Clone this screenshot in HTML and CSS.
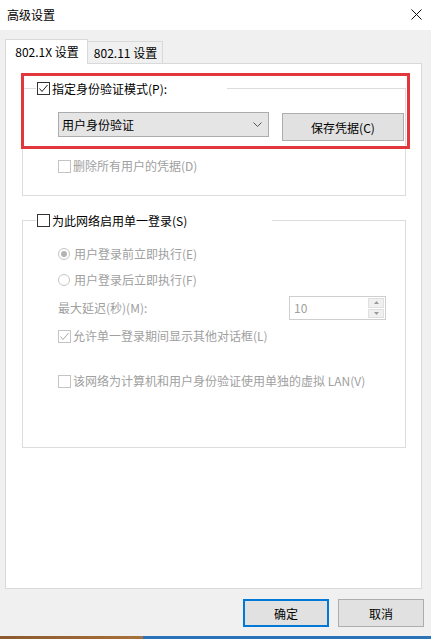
FILE: index.html
```html
<!DOCTYPE html>
<html>
<head>
    <meta charset="utf-8">
    <title>高级设置</title>
    <link rel="stylesheet" href="styles.css">
</head>
<body>
    <div class="window">
        <div class="titlebar">
            <span class="title">高级设置</span>
            <svg class="close" width="11" height="11" viewBox="0 0 11 11">
                <path d="M0.5 0.5 L10.5 10.5 M10.5 0.5 L0.5 10.5" stroke="#111" stroke-width="1" fill="none"/>
            </svg>
        </div>

        <div class="tabs">
            <div class="tab active">802.1X 设置</div>
            <div class="tab">802.11 设置</div>
        </div>

        <div class="panel">
            <!-- 身份验证模式 -->
            <fieldset class="group group-auth">
                <legend class="legend legend-auth">
                    <span class="check on">
                        <svg width="11" height="11" viewBox="0 0 11 11"><path d="M1.5 5.5 L4 8.5 L9.5 2" stroke="#222" stroke-width="1" fill="none"/></svg>
                    </span>
                    指定身份验证模式(P):
                </legend>
                <div class="group-body">
                    <div class="auth-row">
                        <div class="combo">
                            <span>用户身份验证</span>
                            <svg width="9" height="5" viewBox="0 0 9 5"><path d="M0.5 0.5 L4.5 4.5 L8.5 0.5" stroke="#555" stroke-width="1" fill="none"/></svg>
                        </div>
                        <button class="btn save">保存凭据(C)</button>
                    </div>
                    <div class="row row-delete disabled">
                        <span class="check"></span>
                        删除所有用户的凭据(D)
                    </div>
                </div>
            </fieldset>

            <!-- 单一登录 -->
            <fieldset class="group group-sso">
                <legend class="legend legend-sso">
                    <span class="check"></span>
                    为此网络启用单一登录(S)
                </legend>
                <div class="group-body">
                    <div class="row row-before disabled">
                        <span class="radio on"></span>
                        用户登录前立即执行(E)
                    </div>
                    <div class="row row-after disabled">
                        <span class="radio"></span>
                        用户登录后立即执行(F)
                    </div>
                    <div class="row row-delay disabled">
                        <span class="delay-label">最大延迟(秒)(M):</span>
                        <div class="spin">
                            <span class="spin-value">10</span>
                            <div class="spin-buttons">
                                <span class="spin-btn"><svg width="5" height="3" viewBox="0 0 5 3"><path d="M0 3 L2.5 0 L5 3 Z" fill="#9a9a9a"/></svg></span>
                                <span class="spin-btn"><svg width="5" height="3" viewBox="0 0 5 3"><path d="M0 0 L2.5 3 L5 0 Z" fill="#9a9a9a"/></svg></span>
                            </div>
                        </div>
                    </div>
                    <div class="row row-dialogs disabled">
                        <span class="check on">
                            <svg width="11" height="11" viewBox="0 0 11 11"><path d="M1.5 5.5 L4 8.5 L9.5 2" stroke="#a8a8a8" stroke-width="1" fill="none"/></svg>
                        </span>
                        允许单一登录期间显示其他对话框(L)
                    </div>
                    <div class="row row-lan disabled">
                        <span class="check"></span>
                        该网络为计算机和用户身份验证使用单独的虚拟 LAN(V)
                    </div>
                </div>
            </fieldset>
        </div>

        <div class="footer">
            <button class="btn primary">确定</button>
            <button class="btn">取消</button>
        </div>

        <div class="taskbar"></div>

        <!-- 红色标注框 -->
        <div class="highlight"></div>
    </div>
</body>
</html>
```

FILE: styles.css
```css
* {
    box-sizing: border-box;
}

body {
    margin: 0;
    background-color: #f0f0f0;
    font-family: "Noto Sans CJK SC", "Liberation Sans", sans-serif;
    font-size: 12px;
    line-height: 16px;
    color: #000;
}

.window {
    position: relative;
    width: 431px;
    height: 639px;
    overflow: hidden;
}

.titlebar {
    height: 30px;
    background-color: #fff;
    display: flex;
    align-items: center;
    justify-content: space-between;
    padding: 0 9px 1px 7px;
}

.tabs {
    height: 33px;
    display: flex;
    align-items: flex-end;
    padding-left: 5px;
}

.tab {
    width: 75px;
    height: 22px;
    border: 1px solid #d9d9d9;
    border-left: none;
    border-bottom: none;
    background-color: #f0f0f0;
    display: flex;
    align-items: center;
    justify-content: center;
    padding-left: 1px;
}

.tab.active {
    width: 83px;
    height: 25px;
    border-left: 1px solid #d9d9d9;
    background-color: #fff;
    margin-bottom: -1px;
    position: relative;
    z-index: 1;
    padding-bottom: 1px;
}

.panel {
    width: 417px;
    height: 526px;
    margin-left: 5px;
    border: 1px solid #d9d9d9;
    background-color: #fff;
    padding: 17px 0 0 16px;
}

.group {
    margin: 0;
    padding: 0;
    width: 384px;
    border: 1px solid #dcdcdc;
    min-inline-size: 0;
}

.legend {
    height: 15px;
    margin-left: 13px;
    padding: 0 1px;
    display: flex;
    align-items: center;
    gap: 2px;
}

.legend-auth {
    width: 191px;
}

.legend-sso {
    width: 236px;
}

.group-auth .group-body {
    padding: 16px 0 21px 35px;
}

.group-sso {
    margin-top: 17px;
}

.group-sso .group-body {
    padding: 18px 0 58px 35px;
}

.check {
    width: 13px;
    height: 13px;
    border: 1px solid #333;
    background-color: #fff;
    display: inline-flex;
    align-items: center;
    justify-content: center;
    flex-shrink: 0;
}

.radio {
    width: 12px;
    height: 12px;
    border: 1px solid #c4c4c4;
    border-radius: 50%;
    background-color: #fff;
    display: inline-flex;
    align-items: center;
    justify-content: center;
    flex-shrink: 0;
}

.radio.on::after {
    content: "";
    width: 6px;
    height: 6px;
    border-radius: 50%;
    background-color: #b4b4b4;
}

.auth-row {
    display: flex;
    align-items: flex-start;
    gap: 13px;
}

.combo {
    width: 211px;
    height: 25px;
    border: 1px solid #acacac;
    background-color: #e5e5e5;
    display: flex;
    align-items: center;
    justify-content: space-between;
    padding: 0 6px 0 3px;
}

.btn {
    font-family: inherit;
    font-size: 12px;
    color: #000;
    width: 86px;
    height: 28px;
    border: 1px solid #adadad;
    background-color: #e1e1e1;
    padding: 0;
}

.btn.save {
    width: 122px;
    margin-top: 1px;
}

.btn.primary {
    border: 2px solid #0078d7;
}

.row {
    height: 16px;
    display: flex;
    align-items: center;
    gap: 2px;
}

.disabled {
    color: #a0a0a0;
}

.disabled .check {
    border-color: #c4c4c4;
}

.row-delete {
    margin-top: 17px;
}

.row-before .radio,
.row-after .radio {
    margin-right: 2px;
}

.row-after {
    margin-top: 10px;
}

.row-delay {
    height: 24px;
    margin-top: 8px;
    gap: 0;
}

.delay-label {
    width: 231px;
}

.spin {
    width: 97px;
    height: 24px;
    border: 1px solid #cfcfcf;
    display: flex;
    align-items: stretch;
    justify-content: space-between;
}

.spin-value {
    padding-left: 4px;
    display: flex;
    align-items: center;
}

.spin-buttons {
    width: 18px;
    display: flex;
    flex-direction: column;
    padding: 1px;
    gap: 1px;
}

.spin-btn {
    flex: 1;
    background-color: #f0f0f0;
    border: 1px solid #e0e0e0;
    display: flex;
    align-items: center;
    justify-content: center;
}

.row-dialogs {
    margin-top: 8px;
}

.row-lan {
    margin-top: 29px;
}

.footer {
    height: 47px;
    display: flex;
    justify-content: flex-end;
    gap: 9px;
    padding: 10px 7px 0 0;
}

.taskbar {
    height: 3px;
    background: linear-gradient(to right, #8b5a2e 0, #a8703a 143px, #2a73b8 143px, #2a73b8 100%);
}

.highlight {
    position: absolute;
    left: 21px;
    top: 73px;
    width: 389px;
    height: 76px;
    border: 3px solid #e2383d;
}
```
